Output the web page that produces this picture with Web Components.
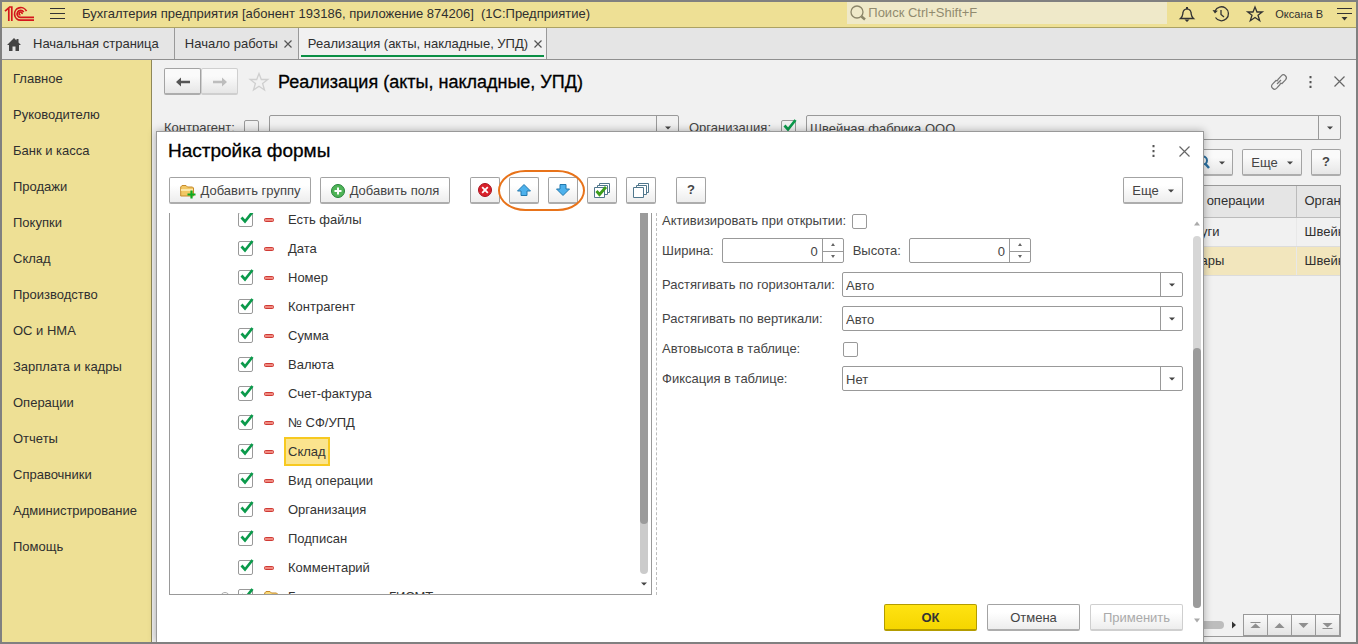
<!DOCTYPE html>
<html lang="ru">
<head>
<meta charset="utf-8">
<title>Бухгалтерия предприятия</title>
<style>
  html, body { height: 100%; margin: 0; }
  body {
    box-sizing: border-box; border: 2px solid #808080; overflow: hidden;
    font: 13px/16px "Liberation Sans", Arial, sans-serif; color: #2f2f2f; background: #f1f1f1;
  }
</style>
</head>
<body>
<app-shell></app-shell>

<script>
const ICONS = {
  logo: [30, 16, `<g fill="none" stroke="#d4161c" stroke-width="1.700"><path d="M0 5.2L3.8 1.8V15M6.800 15V1H4.500"/><path d="M21.500 5.200A6.300 6.300 0 1 0 15.500 14.200H29"/><path d="M18.700 6.200A3.500 3.500 0 1 0 15.500 11.400H29"/><path d="M17 8A1.500 1.500 0 1 0 15.500 9"/></g>`],
  menu: [15, 13, `<path d="M0 1.500H15M0 6.500H15M0 11.500H15" stroke="#333"/>`],
  search: [16, 16, `<circle cx="7" cy="7" r="6" fill="none" stroke="#8b8569" stroke-width="1.300"/><path d="M11.500 11.500L15 14.500" stroke="#8b8569" stroke-width="2.500"/>`],
  bell: [16, 16, `<path d="M1.500 12.500H14.500C12 10.500 12.500 9 12 6.500C11.600 4 10.500 3 8 2.800C5.500 3 4.400 4 4 6.500C3.500 9 4 10.500 1.500 12.500Z" fill="none" stroke="#333" stroke-width="1.300"/><path d="M7 1H9V3H7ZM5.500 13.500H10.500L8 16Z" fill="#333"/>`],
  history: [18, 16, `<path d="M3 5A7 7 0 1 1 3.500 11.500" fill="none" stroke="#333" stroke-width="1.300"/><path d="M0.500 4L3 7.500L5.800 4.800Z" fill="#333"/><path d="M9 4V8.500L12 11" fill="none" stroke="#333" stroke-width="1.300"/>`],
  star: [16, 16, `<path d="M8 1L10 6H15.300L11 9.300L12.700 14.700L8 11.500L3.300 14.700L5 9.300L0.700 6H6Z" fill="none" stroke="#333" stroke-width="1.300"/>`],
  bigstar: [20, 20, `<path d="M10 1.500L12.300 7.500H18.800L13.600 11.500L15.500 18L10 14.200L4.500 18L6.400 11.500L1.200 7.500H7.700Z" fill="none" stroke="#cfcfcf" stroke-width="1.300"/>`],
  options: [15, 14, `<path d="M0 1.500H15M0 6.500H15" stroke="#333"/><path d="M4.500 10H10.500L7.500 13.500Z" fill="#333"/>`],
  home: [14, 13, `<path d="M7 0L9.500 2.500V1H11.500V4.500L14 7H12V13H8.500V8.500H5.500V13H2V7H0Z" fill="#444"/>`],
  close: [8, 8, `<path d="M0.500 0.500L7.500 7.500M7.500 0.500L0.500 7.500" stroke="#555" stroke-width="1.200"/>`],
  bigclose: [11, 11, `<path d="M0.500 0.500L10.500 10.500M10.500 0.500L0.500 10.500" stroke="#666" stroke-width="1.200"/>`],
  dots: [3, 12, `<path d="M0.500 0H2.500V2.200H0.500ZM0.500 5H2.500V7.200H0.500ZM0.500 9.800H2.500V12H0.500Z" fill="#555"/>`],
  link: [16, 16, `<g fill="none" stroke="#777" stroke-width="1.200"><path d="M6.500 6L10.300 1.800A2.900 2.900 0 0 1 14.500 5.800L11 9.500L8.800 9.200"/><path d="M9.500 10L5.700 14.200A2.900 2.900 0 0 1 1.500 10.200L5 6.500L7.200 6.800"/><path d="M6 10L10 6"/></g>`],
  back: [14, 10, `<path d="M0 5L5 0.500V3.800H14V6.200H5V9.500Z" fill="#555"/>`],
  forward: [14, 10, `<path d="M14 5L9 0.500V3.800H0V6.200H9V9.500Z" fill="#bdbdbd"/>`],
  caret: [6, 4, `<path d="M0 0.500H6L3 3.500Z" fill="#444"/>`],
  scrollup: [8, 5, `<path d="M4 0.500L7 4.500H1Z" fill="#aaa"/>`],
  scrolldown: [8, 5, `<path d="M1 0.500H7L4 4.500Z" fill="#aaa"/>`],
  up: [4, 3, `<path d="M2 0L4 3H0Z" fill="#666"/>`],
  down: [4, 3, `<path d="M0 0H4L2 3Z" fill="#666"/>`],
  right: [4, 8, `<path d="M0 0.500L4 4L0 7.500Z" fill="#333"/>`],
  folderplus: [16, 15, `<path d="M0.700 12V3L2 1.500H6L7.500 3H12.500L13.500 4V12Z" fill="#f1c765" stroke="#c68a2b"/><path d="M1 6H13" stroke="#fbe7a9" stroke-width="2"/><path d="M11.500 6.500V14.500M7.500 10.500H15.500" stroke="#0faa23" stroke-width="2.200"/>`],
  folder: [15, 13, `<path d="M0.700 12V3L2 1.500H6L7.500 3H12.500L13.500 4V12Z" fill="#f8d878" stroke="#c68a2b"/>`],
  plus: [14, 14, `<circle cx="7" cy="7" r="6.500" fill="#4fb457" stroke="#25843a"/><path d="M7 3.500V10.500M3.500 7H10.500" stroke="#fff" stroke-width="2"/>`],
  remove: [14, 14, `<circle cx="7" cy="7" r="6.500" fill="#d9212b" stroke="#a9131f"/><path d="M4.200 4.200L9.800 9.800M9.800 4.200L4.200 9.800" stroke="#fff" stroke-width="1.800"/>`],
  moveup: [14, 12, `<path d="M7 0.500L13.500 7H10V11.500H4V7H0.500Z" fill="#4db1ec" stroke="#2379ae"/>`],
  movedown: [14, 12, `<path d="M7 11.500L13.500 5H10V0.500H4V5H0.500Z" fill="#4db1ec" stroke="#2379ae"/>`],
  checkall: [16, 15, `<g fill="#fff" stroke="#50778c"><path d="M5.500 0.500H15.500V9.500H5.500Z"/><path d="M3.500 2.500H13.500V11.500H3.500Z"/><path d="M0.500 4.500H10.500V14.500H0.500Z"/></g><path d="M2.500 8L5.500 11.500L12 4" fill="none" stroke="#3c9c1c" stroke-width="2.800"/>`],
  uncheckall: [16, 15, `<g fill="#fff" stroke="#50778c"><path d="M5.500 0.500H15.500V9.500H5.500Z"/><path d="M3.500 2.500H13.500V11.500H3.500Z"/><path d="M0.500 4.500H10.500V14.500H0.500Z"/></g>`],
  find: [14, 16, `<circle cx="7" cy="5.500" r="4" fill="none" stroke="#2a6f9f" stroke-width="2"/><path d="M9.500 9L13 13" stroke="#2a6f9f" stroke-width="2.500"/>`],
  minus: [10, 4, `<rect x="0.500" y="0.500" width="9" height="3" rx="1" fill="#f08a80" stroke="#cf3a35"/>`],
  tick: [15, 15, `<path d="M3.500 5.500L7 9.500L14.500 0" fill="none" stroke="#0b9a4b" stroke-width="2.700"/>`],
  expand: [10, 10, `<circle cx="5" cy="5" r="4.500" fill="none" stroke="#aaa"/><path d="M5 2.500V7.500M2.500 5H7.500" stroke="#777"/>`],
  first: [11, 7, `<path d="M0.500 0.500H10.500" stroke="#8f8f8f"/><path d="M5.500 1.500L10.500 6H0.500Z" fill="#8f8f8f"/>`],
  prev: [11, 7, `<path d="M5.500 1L10.500 6H0.500Z" fill="#8f8f8f"/>`],
  next: [11, 7, `<path d="M5.500 6L10.500 1H0.500Z" fill="#8f8f8f"/>`],
  last: [11, 7, `<path d="M0.500 6.500H10.500" stroke="#8f8f8f"/><path d="M5.500 5.500L10.500 1H0.500Z" fill="#8f8f8f"/>`]
};

class Base extends HTMLElement {
  connectedCallback() {
    if (this.shadowRoot) return;
    this.attachShadow({ mode: "open" }).innerHTML =
      `<style>*{box-sizing:border-box}button,input,select{font:inherit;color:inherit;margin:0}${this.css()}</style>${this.html()}`;
  }
  a(name) { return this.getAttribute(name) || ""; }
}

customElements.define("ui-icon", class extends Base {
  css() { return `:host{display:inline-flex;flex:none}svg{display:block;overflow:visible}`; }
  html() {
    const [w, h, body] = ICONS[this.a("name")];
    return `<svg width="${w}" height="${h}" viewBox="0 0 ${w} ${h}" aria-hidden="true">${body}</svg>`;
  }
});

customElements.define("ui-button", class extends Base {
  css() {
    return `:host{display:block;flex:none}
    button{width:100%;height:27px;display:flex;align-items:center;justify-content:center;gap:var(--gap,6px);padding:2px 4px 0;
      border:1px solid #a3a3a3;border-bottom:2px solid #adadad;border-radius:2px;color:#444;
      background:var(--btn,linear-gradient(#fff 30%,#ededed))}
    :host([kind=icon]){width:30px}
    :host([kind=icon]) button{padding-top:0}
    :host([kind=plain]) button{border:0;background:none;padding:0;height:auto}
    :host([kind=square]) button{border-color:#999;background:linear-gradient(#fafafa,#e4e4e4);border-width:1px;border-radius:0;height:22px;padding:0}
    :host([kind=action]){width:93px}
    :host([kind=primary]){width:93px}
    :host([kind=primary]) button{background:linear-gradient(#ffe312,#f5d600);border-color:#b39c00;font-weight:bold;color:#333}
    :host([off]) button{color:#aaa;border-color:#cfcfcf}`;
  }
  html() { return `<button type="button" aria-label="${this.a("label")}" ${this.hasAttribute("off") ? "disabled" : ""}><slot></slot></button>`.replace('aria-label=""', ""); }
});

customElements.define("ui-check", class extends Base {
  css() {
    return `:host{display:block;flex:none}
    label{display:flex;align-items:center;gap:var(--gap,6px)}
    .box{display:grid;width:15px;height:15px}
    .box>*{grid-area:1/1}
    input{appearance:none;width:15px;height:15px;border:1px solid #999;border-radius:2px;background:var(--field,#fff)}
    ui-icon{pointer-events:none;display:none}
    input:checked+ui-icon{display:block}
    .text{min-width:var(--label,0)}`;
  }
  html() {
    return `<label><span class="text">${this.a("label")}</span><span class="box"><input type="checkbox" ${this.hasAttribute("checked") ? "checked" : ""}><ui-icon name="tick"></ui-icon></span></label>`;
  }
});

customElements.define("ui-combo", class extends Base {
  css() {
    return `:host{display:flex;align-items:center;color:#444}
    label{flex:none;width:var(--label,auto)}
    .f{flex:1;min-width:0;display:grid;grid-template-columns:1fr 22px;height:25px;border:1px solid #999;border-radius:2px;background:var(--field,#fff)}
    select{grid-area:1/1/2/3;appearance:none;border:0;background:none;padding:2px 26px 0 3px;width:100%}
    .b{grid-area:1/2;border-left:1px solid #999;display:grid;place-items:center;pointer-events:none}`;
  }
  html() {
    const t = this.a("label");
    return `${t ? `<label for="s">${t}</label>` : ""}<span class="f"><select id="s" aria-label="${t || this.a("name")}"><option>${this.a("value")}</option></select><span class="b"><ui-icon name="caret"></ui-icon></span></span>`;
  }
});

customElements.define("ui-number", class extends Base {
  css() {
    return `:host{display:flex;align-items:center;gap:8px;color:#444}
    .f{width:122px;height:25px;display:grid;grid-template:1fr 1fr/1fr 21px;border:1px solid #999;border-radius:2px;background:#fff}
    input{grid-area:1/1/3/2;appearance:textfield;border:0;background:none;text-align:right;padding:2px 4px 0;min-width:0;width:100%}
    input::-webkit-inner-spin-button{display:none}
    button{border:0;border-left:1px solid #999;background:none;padding:0;display:grid;place-items:center}
    button+button{border-top:1px solid #999}`;
  }
  html() {
    return `<label for="n">${this.a("label")}</label><span class="f"><input id="n" type="number" value="0"><button type="button" aria-label="Больше"><ui-icon name="up"></ui-icon></button><button type="button" aria-label="Меньше"><ui-icon name="down"></ui-icon></button></span>`;
  }
});

customElements.define("top-bar", class extends Base {
  css() {
    return `:host{display:flex;align-items:center;height:26px;background:#eee095;border-bottom:1px solid #aca263;padding:0 4px 2px 3px}
    .t{margin-left:17px;white-space:nowrap;flex:1}
    .s{display:flex;align-items:center;gap:2px;width:320px;height:22px;background:#efe9c9;padding:0 3px;align-self:start}
    input{flex:1;border:0;background:none;padding:0;outline:0}
    input::placeholder{color:#918b6f;opacity:1}
    .i{display:flex;align-items:center;gap:17px;margin-left:12px}
    .u{font-size:11px;margin:0 14px 0 12px}
    .m{margin-left:15px}`;
  }
  html() {
    return `<ui-icon name="logo"></ui-icon><ui-button class="m" kind="plain" label="Меню"><ui-icon name="menu"></ui-icon></ui-button>
    <span class="t">Бухгалтерия предприятия [абонент 193186, приложение 874206]&nbsp; (1С:Предприятие)</span>
    <span class="s"><ui-icon name="search"></ui-icon><input type="search" placeholder="Поиск Ctrl+Shift+F" aria-label="Поиск"></span>
    <span class="i"><ui-button kind="plain" label="Оповещения"><ui-icon name="bell"></ui-icon></ui-button>
    <ui-button kind="plain" label="История"><ui-icon name="history"></ui-icon></ui-button>
    <ui-button kind="plain" label="Избранное"><ui-icon name="star"></ui-icon></ui-button></span>
    <span class="u">Оксана В</span><ui-button kind="plain" label="Настройки"><ui-icon name="options"></ui-icon></ui-button>`;
  }
});

customElements.define("app-tab", class extends Base {
  css() {
    return `:host{display:flex;border-right:1px solid #999;padding:0 2px}
    div{display:flex;align-items:center;gap:6px;padding:5px var(--end,4px) 0 8px;border-bottom:2px solid transparent;margin-bottom:2px}
    a{color:inherit;text-decoration:none;white-space:nowrap}
    :host([active]){background:#f1f1f1}
    :host([active]) div{border-color:#0b8f45;padding:5px 2px 0 7px}`;
  }
  html() {
    return `<div><slot></slot><a href="#">${this.a("label")}</a>${this.hasAttribute("closable") ? `<ui-button kind="plain" label="Закрыть"><ui-icon name="close"></ui-icon></ui-button>` : ""}</div>`;
  }
});

customElements.define("tab-strip", class extends Base {
  css() { return `:host{display:flex;height:32px;background:#e5e5e5;border-bottom:1px solid #8f8f8f}.h{margin-right:6px;margin-left:-5px}.home{--end:13px}`; }
  html() {
    return `<app-tab class="home" label="Начальная страница"><ui-icon class="h" name="home"></ui-icon></app-tab>
    <app-tab label="Начало работы" closable></app-tab>
    <app-tab label="Реализация (акты, накладные, УПД)" closable active></app-tab>`;
  }
});

customElements.define("side-nav", class extends Base {
  css() {
    return `:host{display:block;width:150px;flex:none;background:#eee095;border-right:1px solid #8f8859}
    nav{display:flex;flex-direction:column;padding:1px 11px}
    a{height:36px;line-height:36px;color:inherit;text-decoration:none;white-space:nowrap}`;
  }
  html() {
    return `<nav>${["Главное", "Руководителю", "Банк и касса", "Продажи", "Покупки", "Склад", "Производство", "ОС и НМА", "Зарплата и кадры", "Операции", "Отчеты", "Справочники", "Администрирование", "Помощь"].map(t => `<a href="#">${t}</a>`).join("")}</nav>`;
  }
});

customElements.define("doc-page", class extends Base {
  css() {
    return `:host{display:flex;flex-direction:column;height:100%;padding:9px 15px 5px 12px;background:#f1f1f1;--btn:linear-gradient(#fafafa 30%,#e6e6e6)}
    header{display:flex;align-items:center;height:25px;flex:none}
    .n{display:flex;width:74px}
    .n ui-button{width:37px}
    h1{font-size:18px;line-height:24px;font-weight:normal;color:#000;-webkit-text-stroke:.3px;margin:0 auto 0 9px;white-space:nowrap}
    .st{margin-left:11px}
    .r{display:flex;align-items:center;gap:22px;padding-right:10px;margin-right:-14px}
    .f{display:flex;align-items:center;margin-top:21px;color:#444;--field:#f1f1f1;--gap:0;flex:none}
    .f ui-check{margin-right:10px}
    .f ui-combo{width:410px}
    .f .last{flex:1}
    .ch1{--label:80px}.ch2{--label:92px;margin-left:10px}
    .t{display:flex;justify-content:flex-end;gap:9px;margin:9px 0;flex:none;--gap:9px}
    .t .w{width:60px}
    .t .find{width:46px}
    .g{flex:1;min-height:0;display:flex;flex-direction:column;justify-content:space-between;border:1px solid #999;overflow:hidden}
    table{border-collapse:collapse;table-layout:fixed;width:100%}
    th,td{font-weight:normal;text-align:left;padding:0 0 0 8px;height:29px;white-space:nowrap;border-bottom:1px solid #dcdcdc;overflow:hidden;border-right:1px solid #e8e8e8}
    th{height:31px;background:#e5e5e5;border-color:#bbb}
    tr>:last-child{border-right:0}
    .sel td{background:#f2e6bd}
    .p{display:flex;align-items:center;justify-content:flex-end}
    .p i{width:200px;height:8px;border-radius:4px;background:#bdbdbd;margin-right:8px}
    .p ui-icon{margin-right:8px}
    .p ui-button{width:25px;margin-left:-1px}.p ui-button ui-icon{margin:0}`;
  }
  html() {
    return `<header><span class="n"><ui-button label="Назад"><ui-icon name="back"></ui-icon></ui-button><ui-button label="Вперед" off><ui-icon name="forward"></ui-icon></ui-button></span>
    <ui-button class="st" kind="plain" label="В избранное"><ui-icon name="bigstar"></ui-icon></ui-button><h1>Реализация (акты, накладные, УПД)</h1>
    <span class="r"><ui-button kind="plain" label="Ссылка"><ui-icon name="link"></ui-icon></ui-button><ui-button kind="plain" label="Ещё"><ui-icon name="dots"></ui-icon></ui-button><ui-button kind="plain" label="Закрыть"><ui-icon name="bigclose"></ui-icon></ui-button></span></header>
    <div class="f"><ui-check class="ch1" label="Контрагент:"></ui-check><ui-combo name="Контрагент"></ui-combo><ui-check class="ch2" label="Организация:" checked></ui-check><ui-combo class="last" name="Организация" value="Швейная фабрика ООО"></ui-combo></div>
    <div class="t"><ui-button class="find" label="Поиск"><ui-icon name="find"></ui-icon><ui-icon name="caret"></ui-icon></ui-button><ui-button class="w">Еще<ui-icon name="caret"></ui-icon></ui-button><ui-button kind="icon"><b>?</b></ui-button></div>
    <div class="g"><table><colgroup><col><col style="width:125px"><col style="width:44px"></colgroup><thead><tr><th></th><th>Вид операции</th><th>Организация</th></tr></thead>
    <tbody><tr><td></td><td>Услуги</td><td>Швейная фабрика ООО</td></tr><tr class="sel"><td></td><td>Товары</td><td>Швейная фабрика ООО</td></tr></tbody></table>
    <div class="p"><i></i><ui-icon name="right"></ui-icon>${[["first", "В начало"], ["prev", "Назад"], ["next", "Вперед"], ["last", "В конец"]].map(([n, l]) => `<ui-button kind="square" label="${l}"><ui-icon name="${n}"></ui-icon></ui-button>`).join("")}</div></div>`;
  }
});

customElements.define("field-row", class extends Base {
  css() {
    return `:host{display:flex;align-items:center;height:29px}
    label{display:flex;align-items:center}
    .box{display:grid;width:15px;height:15px;margin-right:11px}
    .box>*{grid-area:1/1}
    input{appearance:none;width:15px;height:15px;border:1px solid #999;border-radius:2px;background:#fff}
    .box ui-icon{pointer-events:none;display:none}
    input:checked+ui-icon{display:block}
    .k{width:20px;display:flex}
    .e{width:18px;display:flex}
    .t{padding:4px 2px;border:2px solid transparent;height:29px;line-height:18px;white-space:nowrap}
    :host([selected]) .t{background:#fbe48e;border-color:#f7c920}`;
  }
  html() {
    const g = this.hasAttribute("group");
    return `<span class="e">${g ? `<ui-icon name="expand"></ui-icon>` : ""}</span><label><span class="box"><input type="checkbox" checked><ui-icon name="tick"></ui-icon></span><span class="k"><ui-icon name="${g ? "folder" : "minus"}"></ui-icon></span><span class="t">${this.a("label")}</span></label>`;
  }
});

customElements.define("scroll-bar", class extends Base {
  css() {
    return `:host{display:flex;flex-direction:column;align-items:center;width:8px}
    .k{flex:1;width:8px;border-radius:4px;background:var(--track,#cbcbcb);display:flex;flex-direction:column;justify-content:var(--at,start)}
    .k i{display:block;height:var(--thumb);border-radius:4px;background:#9b9b9b}
    :host([scrolled]) .k,:host([scrolled]) .k i{border-top-left-radius:0;border-top-right-radius:0}`;
  }
  html() { return `<slot name="up"></slot><span class="k"><i></i></span><slot name="down"></slot>`; }
});

customElements.define("form-dialog", class extends Base {
  css() {
    return `:host{display:flex;flex-direction:column;background:#fff;border:1px solid #999;border-bottom:0;box-shadow:0 0 8px rgba(0,0,0,.3);padding:0 2px 11px 12px;color:#333}
    header{display:flex;align-items:center;height:38px;flex:none;padding-right:11px;gap:24px}
    h2{font-size:19px;line-height:24px;font-weight:normal;color:#000;-webkit-text-stroke:.3px;margin:0 auto 0 -1px}
    .t{position:relative;display:flex;gap:9px;padding:7px 18px 0 0;flex:none}
    .g1{width:142px}.g2{width:130px;margin-right:11px}.q{margin-left:11px}.m{width:60px;margin-left:auto;--gap:9px}
    .g1,.g2{--gap:5px}
    .ring{position:absolute;left:329px;top:0;width:87px;height:41px;border:2px solid #e8731a;border-radius:28px/21px;pointer-events:none}
    .w{flex:1;min-height:0;display:flex;padding-top:9px}
    .l{flex:1;min-width:0;display:flex;flex-direction:column}
    .b{flex:1;min-height:0;display:flex}
    .tree{width:483px;flex:none;display:flex;justify-content:space-between;border:1px solid #999;border-top:0;overflow:hidden;padding-right:3px}
    .rows{margin-top:-8px;padding-left:50px}
    .tree scroll-bar{--thumb:311px;padding-bottom:8px}
    .tree scroll-bar ui-icon{margin-top:8px}
    .p{flex:1;min-width:0;border-left:1px dashed #bbb;margin-left:4px;padding:0 10px 0 5px;color:#444;--label:180px}
    .p>*{margin-bottom:9px}
    .p ui-check{height:15px;margin-bottom:10px}
    .p .c0{--label:0}
    .p .c5{--gap:1px;margin:10px 0}
    .d{display:flex;gap:9px}
    footer{display:flex;justify-content:flex-end;gap:10px;padding:9px 10px 0 0;flex:none}
    .s{--thumb:260px;--at:end;--track:#d6d6d6;flex:none;margin:8px 0}
    .s ui-icon{margin-bottom:10px}.s ui-icon+ui-icon{margin:10px 0 0}`;
  }
  html() {
    const rows = ["Есть файлы", "Дата", "Номер", "Контрагент", "Сумма", "Валюта", "Счет-фактура", "№ СФ/УПД", "Склад", "Вид операции", "Организация", "Подписан", "Комментарий"];
    return `<header><h2>Настройка формы</h2><ui-button kind="plain" label="Ещё"><ui-icon name="dots"></ui-icon></ui-button><ui-button kind="plain" label="Закрыть"><ui-icon name="bigclose"></ui-icon></ui-button></header>
    <div class="t"><ui-button class="g1"><ui-icon name="folderplus"></ui-icon>Добавить группу</ui-button><ui-button class="g2"><ui-icon name="plus"></ui-icon>Добавить поля</ui-button>
    ${[["remove", "Удалить"], ["moveup", "Переместить вверх"], ["movedown", "Переместить вниз"], ["checkall", "Отметить все"], ["uncheckall", "Снять отметки"]].map(([n, l]) => `<ui-button kind="icon" label="${l}"><ui-icon name="${n}"></ui-icon></ui-button>`).join("")}
    <ui-button class="q" kind="icon"><b>?</b></ui-button><ui-button class="m">Еще<ui-icon name="caret"></ui-icon></ui-button><span class="ring"></span></div>
    <div class="w"><div class="l"><div class="b">
      <div class="tree"><div class="rows">${rows.map(t => `<field-row label="${t}" ${t === "Склад" ? "selected" : ""}></field-row>`).join("")}<field-row group label="Группа статусов ГИСМТ"></field-row></div>
        <scroll-bar scrolled><ui-icon slot="down" name="caret"></ui-icon></scroll-bar></div>
      <div class="p"><ui-check class="c0" label="Активизировать при открытии:"></ui-check>
        <div class="d"><ui-number label="Ширина:"></ui-number><ui-number label="Высота:"></ui-number></div>
        <ui-combo label="Растягивать по горизонтали:" value="Авто"></ui-combo>
        <ui-combo label="Растягивать по вертикали:" value="Авто"></ui-combo>
        <ui-check class="c5" label="Автовысота в таблице:"></ui-check>
        <ui-combo label="Фиксация в таблице:" value="Нет"></ui-combo></div></div>
      <footer><ui-button kind="primary">ОК</ui-button><ui-button kind="action">Отмена</ui-button><ui-button kind="action" off>Применить</ui-button></footer></div>
      <scroll-bar class="s"><ui-icon slot="up" name="scrollup"></ui-icon><ui-icon slot="down" name="scrolldown"></ui-icon></scroll-bar></div>`;
  }
});

customElements.define("app-shell", class extends Base {
  css() {
    return `:host{display:flex;flex-direction:column;height:100%}
    .b{flex:1;min-height:0;display:flex}
    main{flex:1;min-width:0;position:relative}
    form-dialog{position:absolute;left:4px;right:152px;top:71px;bottom:0}`;
  }
  html() { return `<top-bar></top-bar><tab-strip></tab-strip><div class="b"><side-nav></side-nav><main><doc-page></doc-page><form-dialog role="dialog" aria-label="Настройка формы"></form-dialog></main></div>`; }
});
</script>
</body>
</html>
